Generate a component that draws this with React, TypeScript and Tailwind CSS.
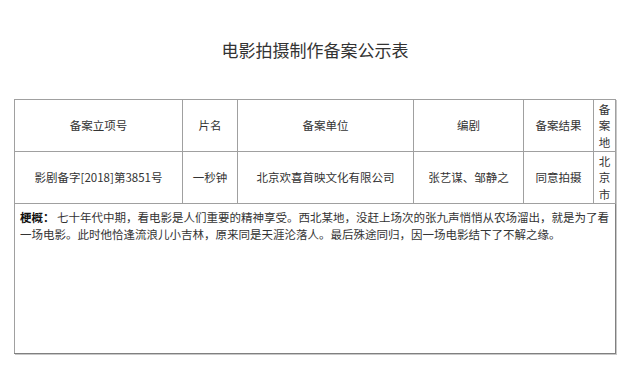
import React from 'react';

const cols = [168, 55, 176, 110, 70, 22];

const head = ['备案立项号', '片名', '备案单位', '编剧', '备案结果'];
const row = ['影剧备字[2018]第3851号', '一秒钟', '北京欢喜首映文化有限公司', '张艺谋、邹静之', '同意拍摄'];

const cell = 'border border-[#a0a0a0] text-center align-middle p-0';

function Stack({ text }: { text: string }) {
    return (
        <div className="flex flex-col items-center leading-[16.5px]">
            {text.split('').map((c, i) => (
                <span key={i}>{c}</span>
            ))}
        </div>
    );
}

export default function App() {
    return (
        <div
            className="w-[630px] h-[370px] bg-white text-[#333] pt-[41px]"
            style={{ fontFamily: '"Noto Sans CJK SC", "Noto Sans", sans-serif' }}
        >
            <h1 className="text-center text-[17px] leading-[18px] font-normal">电影拍摄制作备案公示表</h1>

            <table className="mt-[40px] ml-[14px] w-[601px] table-fixed border-collapse text-[11.5px] border-t border-l border-t-[#909090] border-l-[#909090] shadow-[1px_1px_0_#c8c8c8]">
                <colgroup>
                    {cols.map((w, i) => (
                        <col key={i} style={{ width: w }} />
                    ))}
                </colgroup>
                <tbody>
                    <tr className="h-[52px]">
                        {head.map((h) => (
                            <td key={h} className={cell}>{h}</td>
                        ))}
                        <td className={cell}><Stack text="备案地" /></td>
                    </tr>
                    <tr className="h-[52px]">
                        {row.map((r) => (
                            <td key={r} className={cell}>{r}</td>
                        ))}
                        <td className={cell}><Stack text="北京市" /></td>
                    </tr>
                    <tr className="h-[150px]">
                        <td colSpan={6} className="border border-[#a0a0a0] border-r-[#808080] border-b-[#808080] align-top pl-[5px] pt-[5px] leading-[17px]">
                            <div className="whitespace-nowrap">
                                <span className="font-bold text-[#111]">梗概：</span>
                                {' '}七十年代中期，看电影是人们重要的精神享受。西北某地，没赶上场次的张九声悄悄从农场溜出，就是为了看
                            </div>
                            <div className="whitespace-nowrap">
                                一场电影。此时他恰逢流浪儿小吉林，原来同是天涯沦落人。最后殊途同归，因一场电影结下了不解之缘。
                            </div>
                        </td>
                    </tr>
                </tbody>
            </table>
        </div>
    );
}
